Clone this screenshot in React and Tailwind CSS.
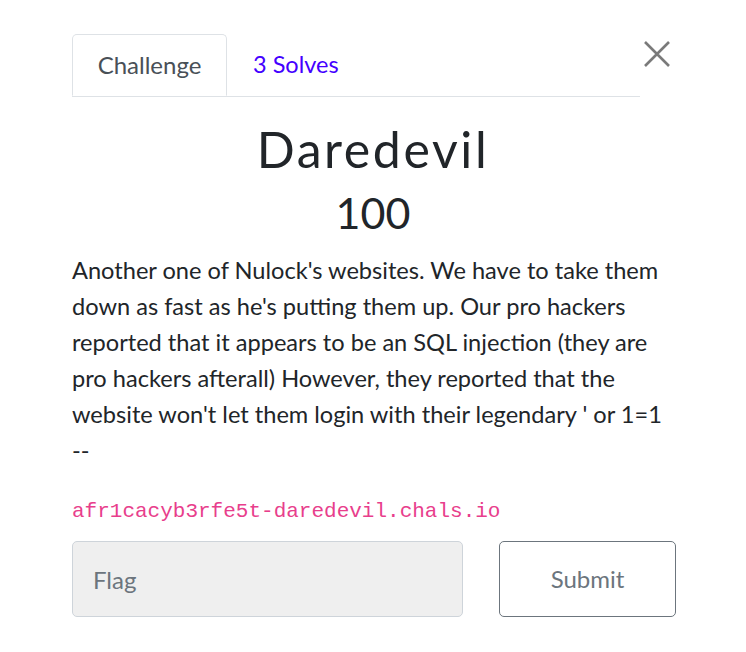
export default function App() {
  return (
    <div
      className="min-h-[652px] w-[746px] bg-white"
      style={{ fontFamily: "Lato, 'Open Sans', sans-serif" }}
    >
      <div className="pl-[72px] pr-[70px] pt-[34px]">
        <div className="flex items-start">
          <div className="flex w-[568px] border-b border-[#dee2e6]">
            <div className="h-[62px] w-[155px] -mb-px flex items-center justify-center rounded-t-[5px] border border-b-white border-[#dee2e6] bg-white text-[24px] text-[#495057]">
              Challenge
            </div>
            <div className="flex h-[62px] items-center px-[26px] text-[23.5px] text-[#4400ff]">
              3 Solves
            </div>
          </div>
          <button className="ml-auto mt-[6px] mr-[5px] text-[#7a7a7a]">
            <svg width="28" height="28" viewBox="0 0 28 28">
              <path d="M2 2 L26 26 M26 2 L2 26" stroke="currentColor" strokeWidth="2.6" fill="none" />
            </svg>
          </button>
        </div>

        <h3 className="mt-[22px] pr-[2px] text-center text-[50px] leading-[60px] tracking-[2.6px] text-[#212529]">
          Daredevil
        </h3>
        <h4 className="mt-[8px] pr-[2px] text-center text-[43px] leading-[52px] text-[#212529]">
          100
        </h4>

        <p className="mt-[13px] pr-[2px] text-[23.6px] leading-[36px] text-[#212529]">
          Another one of Nulock's websites. We have to take them down as fast as he's putting them up. Our pro hackers reported that it appears to be an SQL injection (they are pro hackers afterall) However, they reported that the website won't let them login with their legendary ' or 1=1 --
        </p>

        <div
          className="mt-[32px] text-[21px] leading-[24px] text-[#e83e8c]"
          style={{ fontFamily: "'Liberation Mono', monospace" }}
        >
          afr1cacyb3rfe5t-daredevil.chals.io
        </div>

        <div className="mt-[17px] flex gap-[36px]">
          <input
            className="h-[76px] w-[391px] shrink-0 rounded-[5px] border border-[#ced4da] bg-[#efefef] px-[20px] text-[24px] text-[#495057] outline-none placeholder:text-[#6c757d]"
            placeholder="Flag"
          />
          <button className="h-[76px] w-[177px] shrink-0 rounded-[5px] border border-[#6c757d] bg-white text-[24px] text-[#6c757d]">
            Submit
          </button>
        </div>
      </div>
    </div>
  );
}
